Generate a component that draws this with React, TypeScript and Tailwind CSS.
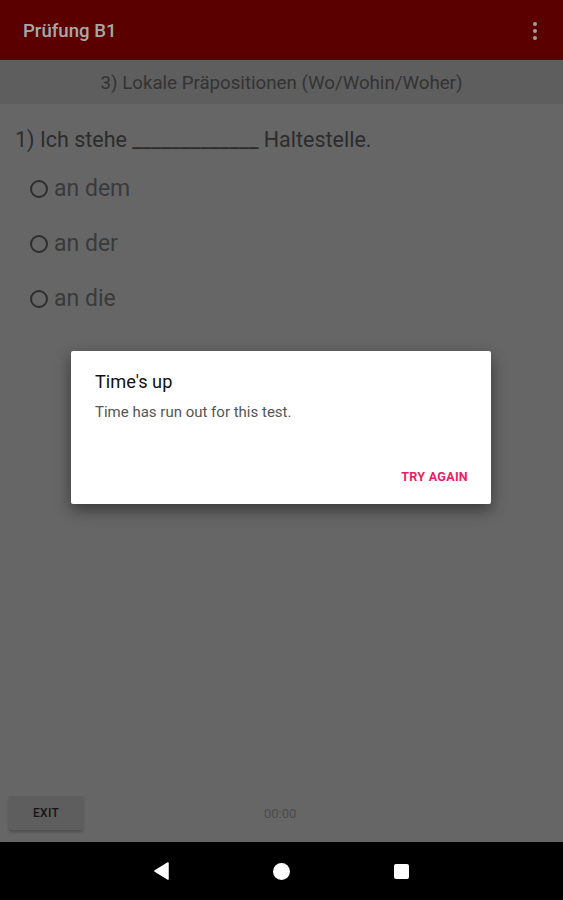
import React from "react";

const font = { fontFamily: "Roboto, 'Noto Sans', sans-serif" };

const Option = ({ label }: { label: string }) => (
  <div className="flex items-center h-[55px] pl-[30px]">
    <span className="w-[18px] h-[18px] rounded-full border-2 border-[#2e2e2e] mr-[6px] mt-[-2px]" />
    <span className="text-[23px] text-[#3a3a3a]">{label}</span>
  </div>
);

export default function App() {
  return (
    <div className="relative w-[563px] h-[900px] flex flex-col bg-[#666666] overflow-hidden" style={font}>
      {/* app bar */}
      <div className="h-[60px] bg-[#5a0000] flex items-center justify-between pl-[23px] pr-[26px] shrink-0">
        <span className="text-[18.6px] font-medium text-[#a8a8a8] mt-[3px]">Prüfung B1</span>
        <span className="flex flex-col gap-[3px] mt-[2px]">
          <span className="w-[4px] h-[4px] rounded-full bg-[#a0a0a0]" />
          <span className="w-[4px] h-[4px] rounded-full bg-[#a0a0a0]" />
          <span className="w-[4px] h-[4px] rounded-full bg-[#a0a0a0]" />
        </span>
      </div>

      {/* section title */}
      <div className="h-[44px] bg-[#5e5e5e] flex items-center justify-center shrink-0">
        <span className="text-[18.7px] text-[#333333] mt-[2px]">3) Lokale Präpositionen (Wo/Wohin/Woher)</span>
      </div>

      {/* question */}
      <div className="flex-1 flex flex-col">
        <div className="pl-[15px] pt-[22px] text-[21.5px] text-[#2c2c2c] leading-[28px]">
          1) Ich stehe _____________ Haltestelle.
        </div>
        <div className="flex flex-col mt-[8px]">
          <Option label="an dem" />
          <Option label="an der" />
          <Option label="an die" />
        </div>
      </div>

      {/* bottom bar */}
      <div className="h-[52px] flex items-center relative shrink-0 pb-[6px]">
        <button className="ml-[9px] w-[74px] h-[34px] bg-[#5e5e5e] rounded-[2px] shadow-[0_2px_3px_rgba(0,0,0,0.25)] text-[12px] font-medium text-[#151515] tracking-wide">
          EXIT
        </button>
        <span className="absolute left-[264px] top-[14px] text-[13px] text-[#4a4a4a]">00:00</span>
      </div>

      {/* nav bar */}
      <div className="h-[58px] bg-black flex items-center justify-center gap-[104px] shrink-0">
        <svg width="16" height="18" viewBox="0 0 16 18" className="ml-[-2px]">
          <path d="M15 1 L2 9 L15 17 Z" fill="#fff" stroke="#fff" strokeLinejoin="round" strokeWidth="1.5" />
        </svg>
        <span className="w-[17px] h-[17px] rounded-full bg-white" />
        <span className="w-[15px] h-[15px] rounded-[2px] bg-white" />
      </div>

      {/* dialog */}
      <div className="absolute left-[71px] top-[351px] w-[420px] h-[153px] bg-white rounded-[2px] shadow-[0_6px_16px_rgba(0,0,0,0.45)] flex flex-col">
        <div className="pl-[24px] pt-[20px] text-[18.2px] text-[#111] leading-[22px]">Time's up</div>
        <div className="pl-[24px] pt-[10px] text-[15px] text-[#555] leading-[18px]">Time has run out for this test.</div>
        <div className="flex-1" />
        <div className="flex justify-end pr-[23px] pb-[17px]">
          <span className="text-[12.5px] font-bold text-[#e91e63] tracking-wide">TRY AGAIN</span>
        </div>
      </div>
    </div>
  );
}
